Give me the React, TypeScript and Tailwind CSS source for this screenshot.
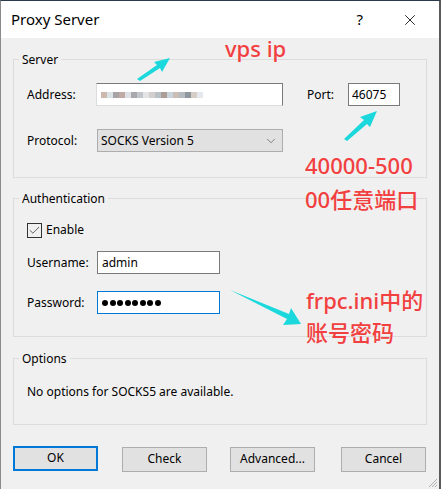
import { X, ChevronDown, Check } from 'lucide-react';

const mosaic = [
  '#cdb8ad', '#d9e3e6', '#a8a4a6', '#bfaaa4', '#dde0e4', '#a9a9ad', '#c2c6cc', '#e4e4e6',
  '#d3cfcf', '#b9c0c6', '#ab9c95', '#c9d3dc', '#cabdb5', '#b4babf', '#8f969e', '#d6cdc6', '#e5e9ee',
];

function GroupBox({ title, className, children }: { title: string; className?: string; children: React.ReactNode }) {
  return (
    <fieldset className={`border border-[#dcdcdc] pl-[13px] pr-3 ${className ?? ''}`}>
      <legend className="-ml-[8px] px-[3px] text-[12px] leading-[15px] text-black">{title}</legend>
      {children}
    </fieldset>
  );
}

function Button({ label, focused }: { label: string; focused?: boolean }) {
  return (
    <button
      className={`h-[25px] w-[85px] bg-[#e1e1e1] text-[12px] text-black ${
        focused ? 'border-2 border-[#0078d7]' : 'border border-[#adadad]'
      }`}
    >
      {label}
    </button>
  );
}

export default function App() {
  return (
    <div
      className="relative h-[489px] w-[441px] overflow-hidden border-t border-l border-r-2 border-t-[#2b3a4a] border-l-[#8a8a8a] border-r-[#5a5a5a] bg-[#f0f0f0]"
      style={{ fontFamily: '"Noto Sans", "Noto Sans CJK SC", sans-serif' }}
    >
      {/* title bar */}
      <div className="flex h-[37px] items-center bg-white pl-[10px]">
        <span className="text-[15px] text-black">Proxy Server</span>
        <span className="ml-auto mr-[38px] text-[15px] text-black">?</span>
        <X size={18} strokeWidth={1.1} className="mr-[20px] text-black" />
      </div>

      <div className="flex flex-col px-[12px] pt-[14px]">
        <GroupBox title="Server" className="h-[126px]">
          <div className="mt-[16px] flex items-center">
            <span className="w-[69px] text-[12px]">Address:</span>
            <div className="flex h-[23px] w-[187px] items-center border border-[#7a7a7a] border-b-[#dcdcdc] border-l-[#dcdcdc] bg-white pl-[4px]">
              {mosaic.map((c, i) => (
                <span key={i} className="h-[6px] w-[6px]" style={{ backgroundColor: c }} />
              ))}
            </div>
            <span className="ml-[24px] w-[41px] text-[12px]">Port:</span>
            <div className="flex h-[23px] w-[52px] items-center border border-[#7a7a7a] bg-white pl-[3px] text-[12px]">
              46075
            </div>
          </div>
          <div className="mt-[23px] flex items-center">
            <span className="w-[70px] text-[12px]">Protocol:</span>
            <div className="flex h-[23px] w-[186px] items-center border border-[#adadad] bg-[#e1e1e1] pl-[3px] pr-[4px] text-[12px]">
              SOCKS Version 5
              <ChevronDown size={14} strokeWidth={1.2} className="ml-auto text-[#555]" />
            </div>
          </div>
        </GroupBox>

        <GroupBox title="Authentication" className="mt-[13px] h-[146px]">
          <div className="mt-[15px] flex items-center">
            <span className="flex h-[15px] w-[15px] items-center justify-center border border-[#333] bg-[#f0f0f0]">
              <Check size={13} strokeWidth={1.4} className="text-[#333]" />
            </span>
            <span className="ml-[4px] text-[12px]">Enable</span>
          </div>
          <div className="mt-[12px] flex items-center">
            <span className="w-[70px] text-[12px]">Username:</span>
            <div className="flex h-[23px] w-[123px] items-center border border-[#7a7a7a] bg-white pl-[4px] text-[12px]">
              admin
            </div>
          </div>
          <div className="mt-[17px] flex items-center">
            <span className="w-[70px] text-[12px]">Password:</span>
            <div className="flex h-[23px] w-[123px] items-center gap-[1.5px] border border-[#0078d7] bg-white pl-[4px]">
              {Array.from({ length: 8 }).map((_, i) => (
                <span key={i} className="h-[6px] w-[6px] rounded-full bg-black" />
              ))}
            </div>
          </div>
        </GroupBox>

        <GroupBox title="Options" className="mt-[14px] h-[74px]">
          <div className="mt-[17px] text-[12px]">No options for SOCKS5 are available.</div>
        </GroupBox>

        <div className="mt-[20px] flex items-center">
          <Button label="OK" focused />
          <div className="ml-[24px]"><Button label="Check" /></div>
          <div className="ml-[23px]"><Button label="Advanced..." /></div>
          <div className="ml-[26px]"><Button label="Cancel" /></div>
        </div>
      </div>

      {/* resize grip */}
      <svg className="absolute bottom-[1px] right-[1px]" width="12" height="12" viewBox="0 0 12 12">
        <path d="M11 3 L3 11 M11 6 L6 11 M11 9 L9 11" stroke="#b0b0b0" strokeWidth="1" />
      </svg>

      {/* annotations */}
      <div className="absolute left-[224px] top-[33px] text-[22px] font-medium leading-[28px] text-[#f23f3f]">vps ip</div>
      <div className="absolute left-[304px] top-[147px] text-[22px] font-medium leading-[34px] text-[#f23f3f]">
        40000-500
        <br />
        00任意端口
      </div>
      <div className="absolute left-[305px] top-[283px] text-[22px] font-medium leading-[32px] text-[#f23f3f]">
        frpc.ini中的
        <br />
        账号密码
      </div>
      <svg className="pointer-events-none absolute left-0 top-0" width="441" height="489">
        <polygon points="136,78 156,64 153,61 169,57 161,71 159,67 139,80" fill="#1ad8dc" />
        <polygon points="343,138 363,119 359,116 376,110 369,126 366,123 346,140" fill="#1ad8dc" />
        <polygon points="229,289 288,313 290,307 300,323 282,324 286,318" fill="#1ad8dc" />
      </svg>
    </div>
  );
}
